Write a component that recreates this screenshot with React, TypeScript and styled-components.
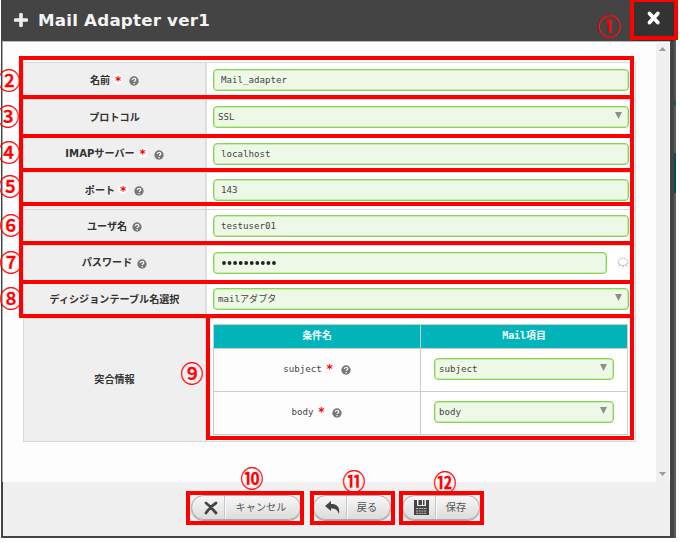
import React from 'react';
import styled, { createGlobalStyle } from 'styled-components';

const SANS = '"DejaVu Sans", "Noto Sans CJK JP", sans-serif';
const MONO = '"DejaVu Sans Mono", "Noto Sans CJK JP", monospace';

const GlobalStyle = createGlobalStyle`
  *, *::before, *::after { box-sizing: border-box; }
  html, body { margin: 0; background: #fff; overflow: hidden; }
`;

const Page = styled.div`
  position: relative;
  display: flex;
  width: 680px;
  height: 542px;
  padding-left: 1px;
  overflow: hidden;
  background: #fff;
  font-family: ${SANS};
`;

const Dialog = styled.section`
  display: flex;
  flex-direction: column;
  width: 673px;
  height: 538px;
  background: #444;
`;

const Header = styled.header`
  display: flex;
  align-items: center;
  height: 41px;
  flex: none;
  background: #444;
`;

const TitleIcon = styled.svg`
  width: 14px;
  height: 14px;
  margin: 0 0 1px 13px;
  flex: none;
`;

const Title = styled.h1`
  margin: 0 0 1px 10px;
  flex: 1;
  color: #f4f4f4;
  font: bold 16.7px/20px ${SANS};
  letter-spacing: 0.2px;
  white-space: nowrap;
`;

const CloseButton = styled.button`
  display: flex;
  justify-content: center;
  width: 41px;
  height: 41px;
  padding: 10px 0 0;
  border: 0;
  background: #333;
`;

const Content = styled.div`
  display: flex;
  flex: none;
  height: 441px;
  margin: 0 4px 0 1px;
  border-top: 1px solid #bbb;
  border-left: 1px solid #aaa;
  background: #fdfdfd;
`;

const FormArea = styled.div`
  width: 653px;
  padding: 20px 0 0 20px;
`;

const Scrollbar = styled.div`
  display: flex;
  flex-direction: column;
  justify-content: space-between;
  align-items: center;
  width: 13px;
  margin-top: 1px;
  padding: 4px 0 6px;
  background: #f0f0f0;
`;

const Arrow = styled.svg`
  width: 7px;
  height: 4px;
  fill: #9a9a9a;
`;

const Form = styled.div`
  display: flex;
  flex-direction: column;
  width: 613px;
  height: 380px;
  border: 1px solid #d9d9d9;
  background: #fff;
`;

const Row = styled.div<{ $tall?: boolean }>`
  display: grid;
  grid-template-columns: 183px 1fr;
  flex: ${(p) => (p.$tall ? '1' : '0 0 36.45px')};
  & + & { border-top: 1px solid #d9d9d9; }
`;

const Label = styled.div`
  display: flex;
  align-items: center;
  justify-content: center;
  padding-bottom: 1px;
  border-right: 2px solid #ddd;
  background: #efefef;
  color: #333;
  font: bold 10.1px/14px ${SANS};
  white-space: nowrap;
`;

const RequiredMark = styled.span<{ $plain?: boolean }>`
  display: flex;
  align-items: center;
  justify-content: center;
  width: 10px;
  height: 10px;
  margin: 0 6px 3px 3px;
  border-radius: 5px;
  background: ${(p) => (p.$plain ? 'transparent' : '#fff')};
  color: #f00;
  font: bold 12px/10px ${SANS};
  padding-top: 3px;
`;

const HelpSvg = styled.svg<{ $gap?: boolean }>`
  width: 10px;
  height: 10px;
  margin: 1px 0 0 ${(p) => (p.$gap ? '5px' : '0')};
  flex: none;
`;

const Cell = styled.div`
  display: flex;
  align-items: center;
  padding: 0 6px 2px;
`;

const Control = styled.div<{ $width?: number; $select?: boolean }>`
  display: flex;
  align-items: center;
  justify-content: space-between;
  width: ${(p) => p.$width ?? 416}px;
  height: 22px;
  padding: 0 6px 0 ${(p) => (p.$select ? 4 : 7)}px;
  border: 1px solid #88d455;
  border-radius: 4px;
  box-shadow: inset 0 0 0 0.5px #a5df7e;
  background: #eef8e6;
  color: #444;
  font: 9.15px/14px ${MONO};
  white-space: nowrap;
`;

const Dropdown = styled.svg`
  width: 7px;
  height: 7px;
  margin-bottom: 3px;
  fill: #8e8e8e;
`;

const Dots = styled.svg`
  width: 56px;
  height: 6px;
  fill: #222;
`;

const EyeSvg = styled.svg`
  width: 12px;
  height: 12px;
  margin-left: 10px;
`;

const MatchTable = styled.div`
  display: grid;
  grid-template-columns: 206px 206px;
  grid-template-rows: 23px 42px 42px;
  gap: 1px;
  width: 415px;
  height: 111px;
  padding: 1px;
  background: #ccc;
`;

const HeadCell = styled.div`
  display: flex;
  align-items: center;
  justify-content: center;
  background: #00b4b9;
  color: #f3ffff;
  font: bold 9.9px/14px ${MONO};
`;

const BodyCell = styled.div<{ $plain?: boolean }>`
  display: flex;
  align-items: center;
  justify-content: center;
  padding-bottom: 1px;
  background: ${(p) => (p.$plain ? '#fdfdfd' : '#fff')};
  color: #444;
  font: 9.15px/14px ${MONO};
`;

const Footer = styled.footer`
  display: flex;
  flex: none;
  height: 54px;
  margin: 0 4px 0 2px;
  padding: 13px 0 0 188px;
  background: #f0f0f0;
`;

const ActionButton = styled.button<{ $width: number; $gap?: number }>`
  display: flex;
  width: ${(p) => p.$width}px;
  height: 25px;
  margin-right: ${(p) => p.$gap ?? 0}px;
  padding: 0;
  border: 1px solid #aaa;
  border-radius: 13px;
  background: linear-gradient(#f7f7f7, #dcdcdc);
  box-shadow: 0 1px 1px #999;
  color: #555;
  font: 10.2px/24px ${SANS};
`;

const ActionIcon = styled.span`
  display: flex;
  align-items: center;
  justify-content: center;
  width: 33px;
  height: 23px;
  padding-left: 5px;
  border-right: 1px solid #c5c5c5;
`;

const ActionText = styled.span`
  flex: 1;
  padding-right: 4px;
  border-left: 1px solid #fafafa;
  text-align: center;
  white-space: nowrap;
`;

const Backdrop = styled.aside`
  display: flex;
  flex-direction: column;
  width: 2px;
  height: 538px;
`;

const BackdropPart = styled.div<{ $height: number; $color: string }>`
  height: ${(p) => p.$height}px;
  background: ${(p) => p.$color};
`;

const Highlight = styled.div<{ $x: number; $y: number; $w: number; $h: number }>`
  position: absolute;
  left: ${(p) => p.$x}px;
  top: ${(p) => p.$y}px;
  width: ${(p) => p.$w}px;
  height: ${(p) => p.$h}px;
  border: 4px solid #f00;
`;

const Callout = styled.span<{ $x: number; $y: number }>`
  position: absolute;
  left: ${(p) => p.$x - 12}px;
  top: ${(p) => p.$y - 13}px;
  display: flex;
  justify-content: center;
  width: 24px;
  height: 24px;
  color: #f00;
  font: 500 23px/24px "Noto Sans CJK JP", sans-serif;
  -webkit-text-stroke: 0.35px #f00;
`;

const Help = ({ gap }: { gap?: boolean }) => (
  <HelpSvg viewBox="0 0 9 9" $gap={gap}>
    <circle cx="4.5" cy="4.5" r="4.2" fill="#777" />
    <path d="M3 3.6C3 1.8 6.1 1.8 6.1 3.5C6.1 4.5 4.6 4.5 4.6 5.5M4.6 6.3V7.4" fill="none" stroke="#fff" strokeWidth="1.1" />
  </HelpSvg>
);

const Chevron = () => (
  <Dropdown viewBox="0 0 7 7"><path d="M0 0H7L3.5 7Z" /></Dropdown>
);

const Eye = () => (
  <EyeSvg viewBox="0 0 12 12" fill="none" stroke="#bbb">
    <path d="M1 6C1.5 -0.5 10.5 -0.5 11 6" strokeDasharray="1.5 .5" />
    <path d="M1 5.5C3 9.5 9 9.5 11 5.5M2.5 8L1.5 9.5M6 8.5V10.5M9.5 8L10.5 9.5" />
  </EyeSvg>
);

type Field = {
  label: string;
  value: string;
  required?: boolean;
  help?: boolean;
  kind?: 'select' | 'password';
};

const fields: Field[] = [
  { label: '名前', value: 'Mail_adapter', required: true, help: true },
  { label: 'プロトコル', value: 'SSL', kind: 'select' },
  { label: 'IMAPサーバー', value: 'localhost', required: true, help: true },
  { label: 'ポート', value: '143', required: true, help: true },
  { label: 'ユーザ名', value: 'testuser01', help: true },
  { label: 'パスワード', value: '', help: true, kind: 'password' },
  { label: 'ディシジョンテーブル名選択', value: 'mailアダプタ', kind: 'select' },
];

const highlights = [
  [630, -2, 48, 42],
  [19, 56, 615, 43],
  [19, 95, 615, 43],
  [19, 134, 615, 38],
  [19, 168, 615, 38],
  [19, 202, 615, 43],
  [19, 241, 615, 43],
  [19, 280, 615, 38],
  [206, 314, 428, 126],
  [186, 491, 118, 34],
  [310, 491, 85, 34],
  [399, 491, 85, 34],
];

const callouts: [string, number, number][] = [
  ['①', 609, 25.5],
  ['②', 9, 80],
  ['③', 8, 115.5],
  ['④', 9, 151.5],
  ['⑤', 10, 185.5],
  ['⑥', 11, 224.5],
  ['⑦', 11, 262],
  ['⑧', 11, 297.5],
  ['⑨', 192, 372.5],
  ['⑩', 252, 477.5],
  ['⑪', 354, 480.5],
  ['⑫', 445, 481.5],
];

export default function App() {
  return (
    <>
      <GlobalStyle />
      <Page>
        <Dialog>
          <Header>
            <TitleIcon viewBox="0 0 14 14"><path d="M7 1.5V12.5M1.5 7H12.5" stroke="#eee" strokeWidth="3.6" strokeLinecap="round" /></TitleIcon>
            <Title>Mail Adapter ver1</Title>
            <CloseButton aria-label="close">
              <svg width="16" height="16" viewBox="0 0 16 16"><path d="M3.5 3.5L11.8 12.5M11.8 3.5L3.5 12.5" stroke="#fff" strokeWidth="3.8" strokeLinecap="round" /></svg>
            </CloseButton>
          </Header>
          <Content>
            <FormArea>
              <Form>
                {fields.map((f) => (
                  <Row key={f.label}>
                    <Label>
                      {f.label}
                      {f.required && <RequiredMark>*</RequiredMark>}
                      {f.help && <Help gap={!f.required} />}
                    </Label>
                    <Cell>
                      <Control $select={f.kind === 'select'} $width={f.kind === 'password' ? 394 : 416}>
                        {f.kind === 'password' ? (
                          <Dots viewBox="0 0 56 6">
                            {Array.from({ length: 10 }, (_, i) => (
                              <circle key={i} cx={3 + i * 5.55} cy="3" r="1.9" />
                            ))}
                          </Dots>
                        ) : f.value}
                        {f.kind === 'select' && <Chevron />}
                      </Control>
                      {f.kind === 'password' && <Eye />}
                    </Cell>
                  </Row>
                ))}
                <Row $tall>
                  <Label>突合情報</Label>
                  <Cell>
                    <MatchTable>
                      <HeadCell>条件名</HeadCell>
                      <HeadCell>Mail項目</HeadCell>
                      {['subject', 'body'].map((name) => (
                        <React.Fragment key={name}>
                          <BodyCell $plain>
                            {name}
                            <RequiredMark $plain>*</RequiredMark>
                            <Help />
                          </BodyCell>
                          <BodyCell>
                            <Control $select $width={180}>{name}<Chevron /></Control>
                          </BodyCell>
                        </React.Fragment>
                      ))}
                    </MatchTable>
                  </Cell>
                </Row>
              </Form>
            </FormArea>
            <Scrollbar>
              <Arrow viewBox="0 0 7 4"><path d="M0 4L3.5 0L7 4Z" /></Arrow>
              <Arrow viewBox="0 0 7 4"><path d="M0 0L3.5 4L7 0Z" /></Arrow>
            </Scrollbar>
          </Content>
          <Footer>
            <ActionButton $width={110} $gap={12}>
              <ActionIcon>
                <svg width="14" height="14" viewBox="0 0 14 14"><path d="M2 2Q6 5 12 12M12 2Q6 6 2 12" fill="none" stroke="#444" strokeWidth="2.8" strokeLinecap="round" /></svg>
              </ActionIcon>
              <ActionText>キャンセル</ActionText>
            </ActionButton>
            <ActionButton $width={78} $gap={11}>
              <ActionIcon>
                <svg width="15" height="13" viewBox="0 0 15 13"><path d="M0 5L6 0V3C12 3 15 6 14 13C12 8 10 7.5 6 7.5V10Z" fill="#444" /></svg>
              </ActionIcon>
              <ActionText>戻る</ActionText>
            </ActionButton>
            <ActionButton $width={78}>
              <ActionIcon>
                <svg width="15" height="15" viewBox="0 0 15 15"><path d="M0 0H3V6H12V0H15V15H0Z M4.5 0H8V5H4.5Z M9 0H10.5V5H9Z" fill="#444" /><path d="M2 8.5H13M2 11H13M2 13.3H13" stroke="#ddd" strokeWidth=".8" strokeDasharray="2 .7" /></svg>
              </ActionIcon>
              <ActionText>保存</ActionText>
            </ActionButton>
          </Footer>
        </Dialog>
        <Backdrop>
          <BackdropPart $height={101} $color="#555" />
          <BackdropPart $height={4} $color="#075d62" />
          <BackdropPart $height={48} $color="#5b5b5b" />
          <BackdropPart $height={40} $color="#004c50" />
          <BackdropPart $height={345} $color="#5b5b5b" />
        </Backdrop>
        {highlights.map(([x, y, w, h]) => (
          <Highlight key={`${x}-${y}`} $x={x} $y={y} $w={w} $h={h} />
        ))}
        {callouts.map(([mark, x, y]) => (
          <Callout key={mark} $x={x} $y={y}>{mark}</Callout>
        ))}
      </Page>
    </>
  );
}
